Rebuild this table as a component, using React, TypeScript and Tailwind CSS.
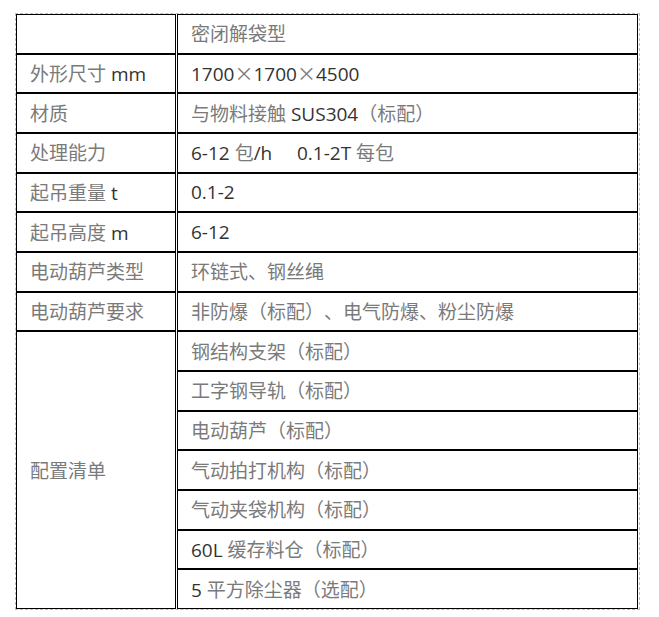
import React from "react";

const CJK = /([\u3000-\u303f\u4e00-\u9fff\uff00-\uffef×]+)/;

function Txt({ s }: { s: string }) {
  const parts = s.split(CJK).filter((p) => p.length > 0);
  return (
    <span className="whitespace-pre [text-spacing-trim:space-all]">
      {parts.map((p, i) => {
        if (CJK.test(p)) {
          const chars = p.split("×");
          return (
            <span
              key={i}
              className="text-[#7a7a7a] [text-spacing-trim:space-all]"
              style={{ fontFamily: '"Noto Sans CJK SC", sans-serif' }}
            >
              {chars.map((c, j) => (
                <React.Fragment key={j}>
                  {j > 0 && <span className="inline-block w-[19px] text-center">×</span>}
                  {c}
                </React.Fragment>
              ))}
            </span>
          );
        }
        return (
          <span key={i} className="text-[#333333]">
            {p}
          </span>
        );
      })}
    </span>
  );
}

const left: { label: string; row: string }[] = [
  { label: "", row: "row-start-1" },
  { label: "外形尺寸 mm", row: "row-start-2" },
  { label: "材质", row: "row-start-3" },
  { label: "处理能力", row: "row-start-4" },
  { label: "起吊重量 t", row: "row-start-5" },
  { label: "起吊高度 m", row: "row-start-6" },
  { label: "电动葫芦类型", row: "row-start-7" },
  { label: "电动葫芦要求", row: "row-start-8" },
];

const right: string[] = [
  "密闭解袋型",
  "1700×1700×4500",
  "与物料接触 SUS304（标配）",
  "6-12 包/h     0.1-2T 每包",
  "0.1-2",
  "6-12",
  "环链式、钢丝绳",
  "非防爆（标配）、电气防爆、粉尘防爆",
  "钢结构支架（标配）",
  "工字钢导轨（标配）",
  "电动葫芦（标配）",
  "气动拍打机构（标配）",
  "气动夹袋机构（标配）",
  "60L 缓存料仓（标配）",
  "5 平方除尘器（选配）",
];

export default function App() {
  return (
    <div
      className="w-[659px] h-[617px] bg-white pt-[13px] pl-[15px] text-[19px] leading-none [text-spacing-trim:space-all]"
      style={{ fontFamily: '"Open Sans", "Noto Sans CJK SC", sans-serif' }}
    >
      <div className="w-[625px] border border-dashed border-[#bdbdbd] pr-px">
        <div className="grid grid-cols-[160px_461px] grid-rows-[repeat(15,minmax(0,1fr))] gap-x-px h-[595px]">
          {left.map((c, i) => (
            <div
              key={"l" + i}
              className={`col-start-1 ${c.row} border border-black flex items-center pl-[13px]`}
            >
              <Txt s={c.label} />
            </div>
          ))}
          <div className="col-start-1 row-start-9 row-span-7 border border-black flex items-center pl-[13px]">
            <Txt s="配置清单" />
          </div>
          {right.map((r, i) => (
            <div
              key={"r" + i}
              className="col-start-2 border border-black flex items-center pl-[13px]"
              style={{ gridRowStart: i + 1 }}
            >
              <Txt s={r} />
            </div>
          ))}
        </div>
      </div>
    </div>
  );
}
